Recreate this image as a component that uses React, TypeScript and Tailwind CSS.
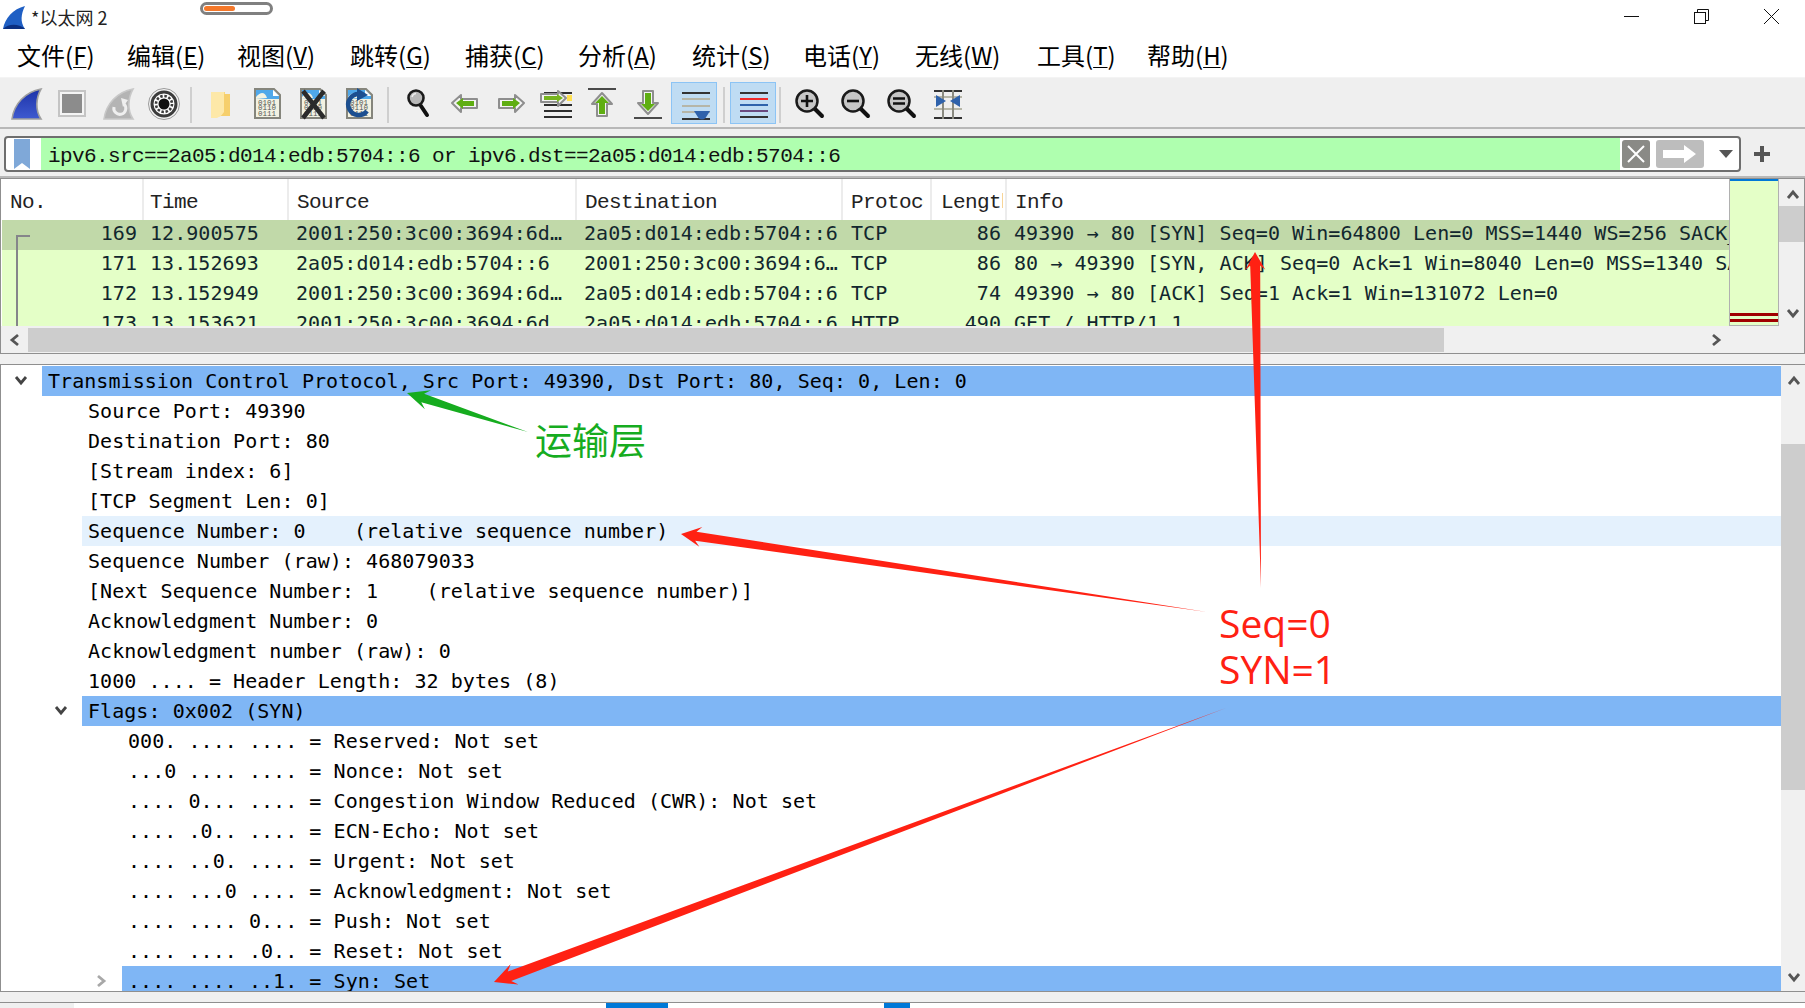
import React from "react";

const mono = "font-['DejaVu_Sans_Mono',monospace] tracking-[0.05px]";
const serif = "font-['Liberation_Mono',monospace] tracking-[-0.6px]";
const cjk = "font-['Noto_Sans_CJK_SC','Noto_Sans',sans-serif]";

const menus = [
  { a: "文件(", k: "F", w: "w-[110px]" },
  { a: "编辑(", k: "E", w: "w-[110px]" },
  { a: "视图(", k: "V", w: "w-[113px]" },
  { a: "跳转(", k: "G", w: "w-[115px]" },
  { a: "捕获(", k: "C", w: "w-[113px]" },
  { a: "分析(", k: "A", w: "w-[114px]" },
  { a: "统计(", k: "S", w: "w-[111px]" },
  { a: "电话(", k: "Y", w: "w-[112px]" },
  { a: "无线(", k: "W", w: "w-[122px]" },
  { a: "工具(", k: "T", w: "w-[110px]" },
  { a: "帮助(", k: "H", w: "w-[110px]" },
];

const SHARK = "M9 37 C11 22 22 10 38 7 C33 16 32 28 38 37 Z";

const Ic = ({ children }: { children: React.ReactNode }) => (
  <svg width="46" height="42" viewBox="0 0 46 42">{children}</svg>
);

const FileBase = ({ id }: { id: string }) => (
  <g>
    <path d="M12 7 H31 L37 13 V36 H12 Z" fill="#f2f2e2" stroke="#85857c" strokeWidth="2" />
    <path d="M13 8 H30 L36 14 V17 H13 Z" fill="#4fa8ea" />
    <path d="M13 15 C18 9 22 10 24 16 L13 17 Z" fill="#f2f2e2" />
    <path d="M30 8 L36 14 H30 Z" fill="#ffffff" />
    <g fontFamily="Liberation Mono, monospace" fontSize="7.5" fill="#555" data-id={id}>
      <text x="15" y="22.5">0101</text>
      <text x="15" y="28">0110</text>
      <text x="15" y="34">0111</text>
    </g>
  </g>
);

const Arrow = ({ pts, inner, fill = "#5fae12" }: { pts: string; inner: string; fill?: string }) => (
  <g>
    <polygon points={pts} fill="#f4f4f4" stroke="#8e8e8e" strokeWidth="2" strokeLinejoin="round" />
    <polygon points={inner} fill={fill} />
  </g>
);

const Mag = ({ children }: { children?: React.ReactNode }) => (
  <g>
    <line x1="27" y1="26" x2="35" y2="34" stroke="#111" strokeWidth="4" strokeLinecap="round" />
    <circle cx="20" cy="19" r="10.5" fill="#c6c6c6" stroke="#1a1a1a" strokeWidth="2.5" />
    {children}
  </g>
);

const icons: Record<string, React.ReactNode> = {
  shark: (
    <Ic>
      <defs>
        <linearGradient id="sh" x1="0" y1="0" x2="0" y2="1">
          <stop offset="0" stopColor="#1d33a8" />
          <stop offset="1" stopColor="#3f5ad0" />
        </linearGradient>
      </defs>
      <path d={SHARK} fill="url(#sh)" stroke="#a0a0a0" strokeWidth="1.6" />
    </Ic>
  ),
  stop: (
    <Ic>
      <rect x="10" y="9" width="26" height="25" fill="#f4f4f4" stroke="#c4c4c4" strokeWidth="2" />
      <rect x="13" y="12" width="20" height="19" fill="#8c8c8c" />
    </Ic>
  ),
  restart: (
    <Ic>
      <path d={SHARK} fill="#b4b4b4" stroke="#c8c8c8" strokeWidth="1.6" />
      <path d="M19 25 A6 6 0 1 0 29 22" fill="none" stroke="#efefef" strokeWidth="3" />
      <polygon points="26,16 33,18 28,25" fill="#efefef" />
    </Ic>
  ),
  options: (
    <Ic>
      <circle cx="23" cy="22" r="15.5" fill="#f4f4f4" stroke="#9a9a9a" strokeWidth="1" />
      <circle cx="23" cy="22" r="12" fill="#fff" stroke="#3c3c3c" strokeWidth="3" />
      <circle cx="23" cy="22" r="8" fill="none" stroke="#3c3c3c" strokeWidth="2.6" strokeDasharray="2.5 1.7" />
      <circle cx="23" cy="22" r="5.5" fill="#111" />
    </Ic>
  ),
  folder: (
    <Ic>
      <path d="M14 10 H28 V15 H33 V34 H24 L14 36 Z" fill="#f9d77e" />
      <path d="M14 10 H27 V32 L20 36 H14 Z" fill="#fde8a8" />
      <path d="M27 12 H33 V34 H24 L27 30 Z" fill="#f6cf6c" />
    </Ic>
  ),
  file: (
    <Ic>
      <FileBase id="a" />
    </Ic>
  ),
  close: (
    <Ic>
      <FileBase id="b" />
      <path d="M14 9 L35 36 M35 9 L14 36" stroke="#2b2b2b" strokeWidth="4.5" />
    </Ic>
  ),
  reload: (
    <Ic>
      <FileBase id="c" />
      <path d="M32 29 A10.5 10.5 0 1 1 24 12" fill="none" stroke="#1c4f90" strokeWidth="4.5" />
      <polygon points="22,6 33,13 22,19" fill="#1c4f90" />
    </Ic>
  ),
  find: (
    <Ic>
      <line x1="26" y1="24" x2="32" y2="33" stroke="#111" strokeWidth="4" strokeLinecap="round" />
      <circle cx="21" cy="16" r="7.5" fill="#b8b8b8" stroke="#1a1a1a" strokeWidth="2.6" />
      <path d="M17 15 A4.5 4.5 0 0 1 21 11.5" fill="none" stroke="#eee" strokeWidth="1.5" />
    </Ic>
  ),
  back: (
    <Ic>
      <Arrow pts="11,21 20,13 20,17 36,17 36,26 20,26 20,30" inner="15,21 22,16 22,19 33,19 33,24 22,24 22,27" />
    </Ic>
  ),
  forward: (
    <Ic>
      <Arrow pts="37,21 28,13 28,17 12,17 12,26 28,26 28,30" inner="33,21 26,16 26,19 15,19 15,24 26,24 26,27" />
    </Ic>
  ),
  goto: (
    <Ic>
      <rect x="11" y="10" width="28" height="2" fill="#2d2d2d" />
      <rect x="34" y="13" width="5" height="6" fill="#ffe050" />
      <rect x="11" y="22" width="28" height="2" fill="#2d2d2d" />
      <rect x="11" y="28" width="28" height="2" fill="#2d2d2d" />
      <rect x="11" y="34" width="28" height="2" fill="#2d2d2d" />
      <Arrow pts="33,16 25,9 25,12 8,12 8,20 25,20 25,24" inner="30,16 24,12 24,14 11,14 11,18 24,18 24,20" fill="#76b41e" />
    </Ic>
  ),
  top: (
    <Ic>
      <rect x="9" y="6" width="28" height="2" fill="#4a4a4a" />
      <Arrow pts="23,11 33,22 28,22 28,34 18,34 18,22 13,22" inner="23,14 30,21 26,21 26,32 20,32 20,21 16,21" />
    </Ic>
  ),
  bottom: (
    <Ic>
      <rect x="9" y="35" width="28" height="2" fill="#4a4a4a" />
      <Arrow pts="23,32 33,21 28,21 28,9 18,9 18,21 13,21" inner="23,29 30,22 26,22 26,11 20,11 20,22 16,22" />
    </Ic>
  ),
  autoscroll: (
    <Ic>
      <rect x="11" y="10" width="28" height="2" fill="#333" />
      <rect x="11" y="16" width="28" height="2" fill="#b6b6a8" />
      <rect x="11" y="23" width="28" height="2" fill="#b6b6a8" />
      <rect x="11" y="29" width="28" height="2" fill="#b6b6a8" />
      <rect x="11" y="36" width="28" height="2" fill="#333" />
      <path d="M23 29 H39 L34.5 36 Q31 39 27.5 36 Z" fill="#2f62ab" />
    </Ic>
  ),
  colorize: (
    <Ic>
      <rect x="10" y="10" width="28" height="2" fill="#333" />
      <rect x="10" y="16" width="28" height="2" fill="#ed2a2a" />
      <rect x="10" y="22" width="28" height="2" fill="#2f62ab" />
      <rect x="10" y="28" width="28" height="2" fill="#6a4a80" />
      <rect x="10" y="34" width="28" height="2" fill="#333" />
    </Ic>
  ),
  zoomin: (
    <Ic>
      <Mag>
        <path d="M14 19 H26 M20 13 V25" stroke="#111" strokeWidth="2.6" />
      </Mag>
    </Ic>
  ),
  zoomout: (
    <Ic>
      <Mag>
        <path d="M14 19 H26" stroke="#111" strokeWidth="2.6" />
      </Mag>
    </Ic>
  ),
  zoomeq: (
    <Ic>
      <Mag>
        <path d="M14 16.5 H26 M14 21.5 H26" stroke="#111" strokeWidth="2.6" />
      </Mag>
    </Ic>
  ),
  resize: (
    <Ic>
      <rect x="9" y="8" width="28" height="2" fill="#333" />
      <rect x="9" y="26" width="28" height="2" fill="#b6b6a8" />
      <rect x="9" y="35" width="28" height="2" fill="#333" />
      <rect x="9" y="14" width="28" height="2" fill="#b6b6a8" />
      <rect x="17" y="8" width="2" height="29" fill="#8a8a80" />
      <rect x="27" y="8" width="2" height="29" fill="#8a8a80" />
      <polygon points="11,13 21,19 11,25" fill="#2f62ab" />
      <polygon points="35,13 25,19 35,25" fill="#2f62ab" />
    </Ic>
  ),
};

const Tool = ({ name, on }: { name: string; on?: boolean }) => (
  <div className={on ? "w-[46px] h-[42px] bg-[#bfdcf3] shadow-[inset_0_0_0_1px_#8cc4f5]" : "w-[46px] h-[42px]"}>{icons[name]}</div>
);

const Sep = ({ c }: { c: string }) => <div className={c + " w-[2px] h-[36px] bg-[#cfcfcf] self-center"} />;

type P = [string, string, string, string, string, string, string];
const packets: { d: P; sel?: boolean }[] = [
  { sel: true, d: ["169", "12.900575", "2001:250:3c00:3694:6d…", "2a05:d014:edb:5704::6", "TCP", "86", "49390 → 80 [SYN] Seq=0 Win=64800 Len=0 MSS=1440 WS=256 SACK_PERM=1"] },
  { d: ["171", "13.152693", "2a05:d014:edb:5704::6", "2001:250:3c00:3694:6…", "TCP", "86", "80 → 49390 [SYN, ACK] Seq=0 Ack=1 Win=8040 Len=0 MSS=1340 SACK_PERM=1"] },
  { d: ["172", "13.152949", "2001:250:3c00:3694:6d…", "2a05:d014:edb:5704::6", "TCP", "74", "49390 → 80 [ACK] Seq=1 Ack=1 Win=131072 Len=0"] },
  { d: ["173", "13.153621", "2001:250:3c00:3694:6d", "2a05:d014:edb:5704::6", "HTTP", "490", "GET / HTTP/1.1"] },
];

type Row = { t: string; l: 0 | 1 | 2; k?: "sel" | "hl"; c?: "down" | "right" };
const rows: Row[] = [
  { t: "Transmission Control Protocol, Src Port: 49390, Dst Port: 80, Seq: 0, Len: 0", l: 0, k: "sel", c: "down" },
  { t: "Source Port: 49390", l: 1 },
  { t: "Destination Port: 80", l: 1 },
  { t: "[Stream index: 6]", l: 1 },
  { t: "[TCP Segment Len: 0]", l: 1 },
  { t: "Sequence Number: 0    (relative sequence number)", l: 1, k: "hl" },
  { t: "Sequence Number (raw): 468079033", l: 1 },
  { t: "[Next Sequence Number: 1    (relative sequence number)]", l: 1 },
  { t: "Acknowledgment Number: 0", l: 1 },
  { t: "Acknowledgment number (raw): 0", l: 1 },
  { t: "1000 .... = Header Length: 32 bytes (8)", l: 1 },
  { t: "Flags: 0x002 (SYN)", l: 1, k: "sel", c: "down" },
  { t: "000. .... .... = Reserved: Not set", l: 2 },
  { t: "...0 .... .... = Nonce: Not set", l: 2 },
  { t: ".... 0... .... = Congestion Window Reduced (CWR): Not set", l: 2 },
  { t: ".... .0.. .... = ECN-Echo: Not set", l: 2 },
  { t: ".... ..0. .... = Urgent: Not set", l: 2 },
  { t: ".... ...0 .... = Acknowledgment: Not set", l: 2 },
  { t: ".... .... 0... = Push: Not set", l: 2 },
  { t: ".... .... .0.. = Reset: Not set", l: 2 },
  { t: ".... .... ..1. = Syn: Set", l: 2, k: "sel", c: "right" },
];
const gutter = ["w-[41px]", "w-[81px]", "w-[121px]"];

const Chev = ({ dir, color = "#555", w = 2.8 }: { dir: "up" | "down" | "left" | "right"; color?: string; w?: number }) => {
  const p = { up: "2,10 7,4 12,10", down: "2,4 7,10 12,4", left: "10,2 4,7 10,12", right: "4,2 10,7 4,12" }[dir];
  return (
    <svg width="14" height="14" viewBox="0 0 14 14">
      <polyline points={p} fill="none" stroke={color} strokeWidth={w} />
    </svg>
  );
};

function arrowPts(tx: number, ty: number, hx: number, hy: number, len: number, half: number, shaft: number) {
  const dx = hx - tx;
  const dy = hy - ty;
  const L = Math.hypot(dx, dy);
  const ux = dx / L;
  const uy = dy / L;
  const nx = -uy;
  const ny = ux;
  const bx = hx - ux * len;
  const by = hy - uy * len;
  const mx = hx - ux * (len * 0.75);
  const my = hy - uy * (len * 0.75);
  const pts = [
    [tx, ty],
    [mx + nx * shaft, my + ny * shaft],
    [bx + nx * half, by + ny * half],
    [hx, hy],
    [bx - nx * half, by - ny * half],
    [mx - nx * shaft, my - ny * shaft],
  ];
  return pts.map((q) => q[0].toFixed(1) + "," + q[1].toFixed(1)).join(" ");
}

export default function App() {
  return (
    <div className="relative w-[1805px] h-[1008px] overflow-hidden flex flex-col bg-[#f0f0f0] text-black">
      {/* Title bar */}
      <div className="h-[40px] bg-white flex items-start shrink-0">
        <svg className="ml-[2px] mt-[5px]" width="25" height="25" viewBox="0 0 25 25">
          <path d="M1 24 C3 13 11 4 23 1 C19 9 18 17 23 24 Z" fill="#1f5fc4" />
          <path d="M1 24 C6 19 16 18 23 24 Z" fill="#0b2f80" />
        </svg>
        <div className={cjk + " ml-[4px] mt-[3px] text-[18px] leading-[28px] text-[#222]"}>*以太网 2</div>
        <div className="ml-auto mr-[26px] mt-[9px] flex gap-[55px]">
          <svg width="15" height="15" viewBox="0 0 15 15"><path d="M0 7.5 H15" stroke="#111" strokeWidth="1" /></svg>
          <svg width="15" height="15" viewBox="0 0 15 15" fill="none" stroke="#111"><rect x="0.5" y="3.5" width="11" height="11" /><path d="M3.5 3.5 V0.5 H14.5 V11.5 H11.5" /></svg>
          <svg width="15" height="15" viewBox="0 0 15 15"><path d="M0 0 L15 15 M15 0 L0 15" stroke="#111" strokeWidth="1" /></svg>
        </div>
      </div>
      <div className="absolute left-[200px] top-[2px] w-[73px] h-[13px] rounded-full border-[3px] border-[#808080] bg-white p-[1px]">
        <div className="w-[31px] h-full rounded-full bg-[#f4782a]" />
      </div>
      {/* Menu bar */}
      <div className={cjk + " h-[38px] bg-white flex items-start pl-[17px] text-[24px] leading-[30px] text-black shrink-0 border-b border-[#f4f4f4]"}>
        {menus.map((m) => (
          <div key={m.k} className={m.w + " shrink-0 whitespace-pre"}>
            {m.a}
            <span className="underline underline-offset-2 decoration-1">{m.k}</span>)
          </div>
        ))}
      </div>
      {/* Toolbar */}
      <div className="h-[49px] flex items-start pt-[4px] pl-[3px] bg-[#efefef] shrink-0">
        <Tool name="shark" />
        <Tool name="stop" />
        <Tool name="restart" />
        <Tool name="options" />
        <Sep c="ml-[3px] mr-[5px]" />
        <Tool name="folder" />
        <Tool name="file" />
        <Tool name="close" />
        <Tool name="reload" />
        <Sep c="ml-[6px] mr-[6px]" />
        <Tool name="find" />
        <Tool name="back" />
        <Tool name="forward" />
        <Tool name="goto" />
        <Tool name="top" />
        <Tool name="bottom" />
        <Tool name="autoscroll" on />
        <Sep c="ml-[6px] mr-[5px]" />
        <Tool name="colorize" on />
        <Sep c="ml-[3px] mr-[6px]" />
        <Tool name="zoomin" />
        <Tool name="zoomout" />
        <Tool name="zoomeq" />
        <Tool name="resize" />
      </div>
      <div className="h-[2px] bg-[#b8b8b8] shrink-0" />
      {/* Filter */}
      <div className="h-[46px] pt-[7px] pl-[4px] flex items-start bg-[#efefef] shrink-0">
        <div className="w-[1737px] h-[36px] flex border-2 border-[#6e6e6e] rounded-[4px] bg-white overflow-hidden">
          <div className="w-[35px] flex items-center justify-center pr-[4px]">
            <svg width="16" height="30" viewBox="0 0 16 30"><path d="M0 0 H16 V30 L8 24 L0 30 Z" fill="#7fa8d8" /></svg>
          </div>
          <div className={serif + " w-[1579px] bg-[#afffaf] text-[21px] leading-[38px] pl-[7px] whitespace-pre text-[#111]"}>ipv6.src==2a05:d014:edb:5704::6 or ipv6.dst==2a05:d014:edb:5704::6</div>
          <div className="w-[28px] h-[28px] ml-[2px] mt-[2px] rounded-[3px] bg-[#8a8a86] flex items-center justify-center">
            <svg width="20" height="20" viewBox="0 0 20 20"><path d="M2 2 L18 18 M18 2 L2 18" stroke="#fff" strokeWidth="2" /></svg>
          </div>
          <div className="w-[48px] h-[28px] ml-[6px] mt-[2px] rounded-[3px] bg-[#bdbdbd] flex items-center justify-center">
            <svg width="34" height="18" viewBox="0 0 34 18"><polygon points="0,5 21,5 21,0 33,9 21,18 21,13 0,13" fill="#fff" /></svg>
          </div>
          <div className="flex-1 flex items-center justify-center pl-[8px]">
            <svg width="14" height="8" viewBox="0 0 14 8"><polygon points="0,0 14,0 7,8" fill="#555" /></svg>
          </div>
        </div>
        <svg className="ml-[13px] mt-[10px]" width="16" height="16" viewBox="0 0 16 16"><path d="M6 0 H10 V6 H16 V10 H10 V16 H6 V10 H0 V6 H6 Z" fill="#555" /></svg>
      </div>
      <div className="h-[3px] bg-[#b8b8b8] border-t border-[#efefef] shrink-0" />

      {/* Packet list */}
      <div className="h-[176px] border border-[#8f8f8f] bg-white flex flex-col shrink-0">
        <div className="h-[147px] flex">
          <div className="w-[1728px] shrink-0 flex flex-col overflow-hidden relative">
            <div className={serif + " h-[41px] flex text-[21px] leading-[47px] text-[#222] ml-px shrink-0 whitespace-pre"}>
              <div className="w-[142px] pl-[8px] border-r-2 border-[#ececec]">No.</div>
              <div className="w-[145px] pl-[6px] border-r-2 border-[#ececec]">Time</div>
              <div className="w-[288px] pl-[8px] border-r-2 border-[#ececec]">Source</div>
              <div className="w-[266px] pl-[8px] border-r-2 border-[#ececec]">Destination</div>
              <div className="w-[89px] pl-[8px] border-r-2 border-[#ececec]"><div className="w-[73px] overflow-hidden">Protocol</div></div>
              <div className="w-[75px] pl-[9px] border-r-2 border-[#ececec]"><div className="w-[62px] overflow-hidden">Length</div></div>
              <div className="pl-[8px]">Info</div>
            </div>
            {packets.map((p) => (
              <div key={p.d[0]} className={(p.sel ? "bg-[#c1d9a9] " : "bg-[#e4ffc7] ") + mono + " ml-px h-[30px] shrink-0 flex text-[20px] leading-[27px] text-[#12272e] whitespace-pre"}>
                <div className="w-[142px] pr-[7px] text-right">{p.d[0]}</div>
                <div className="w-[145px] pl-[6px]">{p.d[1]}</div>
                <div className="w-[288px] pl-[7px] overflow-hidden">{p.d[2]}</div>
                <div className="w-[266px] pl-[7px] overflow-hidden">{p.d[3]}</div>
                <div className="w-[89px] pl-[8px]">{p.d[4]}</div>
                <div className="w-[75px] pr-[6px] text-right">{p.d[5]}</div>
                <div className="flex-1 pl-[7px] overflow-hidden">{p.d[6]}</div>
              </div>
            ))}
            <div className="absolute left-[15px] top-[56px] w-[14px] h-[100px] border-l-2 border-t-2 border-[#85858a]" />
          </div>
          <div className="w-[50px] shrink-0 flex flex-col bg-[#e4ffc7] border-l border-r border-b border-[#b0b0b0]">
            <div className="h-[2px] bg-[#0078d7]" />
            <div className="flex-1" />
            <div className="h-[3px] bg-[#a00000]" />
            <div className="h-[3px]" />
            <div className="h-[3px] bg-[#a00000]" />
            <div className="h-[3px]" />
          </div>
          <div className="flex-1 flex flex-col bg-[#f0f0f0]">
            <div className="h-[27px] flex items-start justify-center pt-[9px] pl-[2px]"><Chev dir="up" /></div>
            <div className="h-[36px] bg-[#cdcdcd]" />
            <div className="flex-1" />
            <div className="h-[28px] flex items-start justify-center pt-[8px] pl-[2px]"><Chev dir="down" /></div>
          </div>
        </div>
        <div className="flex-1 flex items-center bg-[#f0f0f0]">
          <div className="w-[27px] flex justify-center"><Chev dir="left" /></div>
          <div className="w-[1416px] h-[24px] bg-[#cdcdcd]" />
          <div className="ml-[265px]"><Chev dir="right" /></div>
        </div>
      </div>
      <div className="h-[10px] shrink-0" />

      {/* Details */}
      <div className="h-[628px] border-y border-r-0 border-l border-[#8f8f8f] bg-white flex shrink-0">
        <div className={mono + " flex-1 overflow-hidden pt-px text-[20px] leading-[30px] text-black"}>
          {rows.map((r) => (
            <div key={r.t} className="flex h-[30px]">
              <div className={gutter[r.l] + " shrink-0 flex items-center justify-end pr-[14px] " + (r.c === "down" ? "pb-[3px]" : "")}>
                {r.c === "down" && <Chev dir="down" color="#444" />}
                {r.c === "right" && <Chev dir="right" color="#a8a8a8" />}
              </div>
              <div className={(r.k === "sel" ? "bg-[#7fb6f5] " : r.k === "hl" ? "bg-[#e4f1fd] " : "") + "flex-1 pl-[6px] whitespace-pre"}>{r.t}</div>
            </div>
          ))}
        </div>
        <div className="w-[24px] shrink-0 flex flex-col bg-[#f0f0f0]">
          <div className="h-[32px] flex items-start justify-center pt-[9px] pl-[2px]"><Chev dir="up" /></div>
          <div className="h-[47px]" />
          <div className="h-[346px] bg-[#cdcdcd]" />
          <div className="flex-1" />
          <div className="h-[28px] flex items-start justify-center pt-[7px] pl-[2px]"><Chev dir="down" /></div>
        </div>
      </div>
      <div className="h-[10px] shrink-0" />

      {/* Status */}
      <div className="flex-1 border-t border-[#8f8f8f] bg-white flex">
        <div className="w-[74px] bg-[#f0f0f0]" />
        <div className="w-[532px]" />
        <div className="w-[62px] bg-[#0078d7]" />
        <div className="w-[216px]" />
        <div className="w-[26px] bg-[#0078d7]" />
      </div>

      {/* Annotations */}
      <svg className="absolute left-0 top-0 pointer-events-none" width="1805" height="1008" viewBox="0 0 1805 1008">
        <polygon points={arrowPts(528, 432, 407, 393, 22, 10, 4.5)} fill="#16ac1f" />
        <polygon points={arrowPts(1261, 588, 1255, 252, 18, 10, 5)} fill="#ff2113" />
        <polygon points={arrowPts(1207, 612, 681, 534, 20, 10, 4.5)} fill="#ff2113" />
        <polygon points={arrowPts(1226, 708, 494, 982, 22, 11, 5)} fill="#ff2113" />
      </svg>
      <div className={cjk + " absolute left-[535px] top-[412px] text-[37px] leading-[54px] text-[#16ac1f]"}>运输层</div>
      <div className="absolute left-[1219px] top-[600px] font-['Open_Sans',sans-serif] text-[39px] leading-[46px] text-[#ff2113]">
        <div>Seq=0</div>
        <div>SYN=1</div>
      </div>
    </div>
  );
}
